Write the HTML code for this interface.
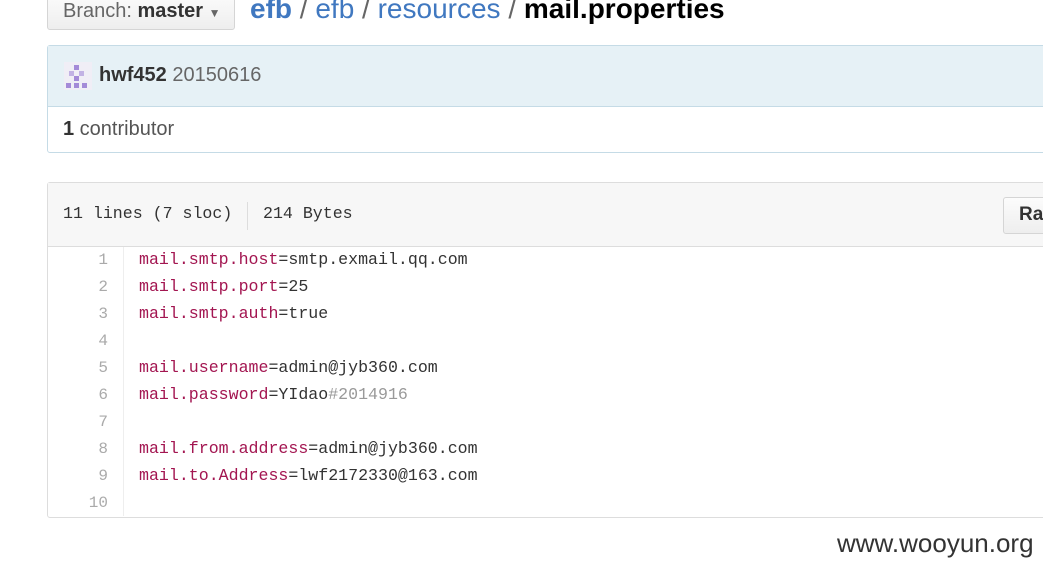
<!DOCTYPE html>
<html><head><style>
body{margin:0;width:1043px;height:573px;overflow:hidden;background:#fff;font-family:"Liberation Sans",Arial,sans-serif;position:relative}
.a{position:absolute}
.mono{font-family:"Liberation Mono",monospace;font-size:16.6px}
.k{color:#a31651}
.c{color:#999}
.ln{position:absolute;left:48px;width:60px;text-align:right;color:#aaa;font-family:"Liberation Mono",monospace;font-size:16px}
</style></head><body>
<div class="a" style="left:47px;top:-8px;width:186px;height:36px;border:1px solid #d5d5d5;border-radius:3px;background:linear-gradient(#fcfcfc,#eee)"></div>
<div class="a" style="left:63px;top:0px;font-size:20px;color:#666">Branch: <b style="color:#333">master</b> <span style="font-size:12px">▼</span></div>
<div class="a" style="left:250px;top:-7px;font-size:28px;color:#4078c0;white-space:nowrap"><b>efb</b> <span style="color:#666">/</span> efb <span style="color:#666">/</span> resources <span style="color:#666">/</span> <b style="color:#000">mail.properties</b></div>

<div class="a" style="left:47px;top:45px;width:1010px;height:106px;border:1px solid #c5dbe6;border-radius:3px;background:#fff"></div>
<div class="a" style="left:48px;top:46px;width:1000px;height:60px;background:#e6f1f6;border-bottom:1px solid #c5dbe6"></div>
<svg class="a" style="left:64px;top:62px" width="28" height="28" viewBox="0 0 28 28"><rect width="28" height="28" fill="#f0eef6"/><g fill="#a48ad8"><rect x="10" y="3" width="5" height="5"/><rect x="5" y="9" width="5" height="5" opacity=".6"/><rect x="15" y="9" width="5" height="5" opacity=".6"/><rect x="10" y="14" width="5" height="5"/><rect x="2" y="21" width="5" height="5"/><rect x="10" y="21" width="5" height="5"/><rect x="18" y="21" width="5" height="5"/></g></svg>
<div class="a" style="left:99px;top:64px;font-size:20px;color:#666"><b style="color:#333">hwf452</b> 20150616</div>
<div class="a" style="left:63px;top:118px;font-size:20px;color:#555"><b style="color:#333">1</b> contributor</div>

<div class="a" style="left:47px;top:182px;width:1010px;height:334px;border:1px solid #ddd;border-radius:3px"></div>
<div class="a" style="left:48px;top:183px;width:1000px;height:63px;background:#f7f7f7;border-bottom:1px solid #ddd"></div>
<div class="a mono" style="left:63px;top:204px;color:#333">11 lines (7 sloc)</div>
<div class="a" style="left:247px;top:202px;width:1px;height:28px;background:#ddd"></div>
<div class="a mono" style="left:263px;top:204px;color:#333">214 Bytes</div>
<div class="a" style="left:1003px;top:197px;width:60px;height:35px;border:1px solid #d5d5d5;border-radius:3px;background:linear-gradient(#fcfcfc,#eee)"></div>
<div class="a" style="left:1019px;top:204px;font-size:19px;font-weight:bold;color:#333">Ra</div>
<div class="a" style="left:123px;top:247px;width:1px;height:269px;background:#eee"></div>

<div class="ln" style="top:251px">1</div><div class="ln" style="top:278px">2</div><div class="ln" style="top:305px">3</div><div class="ln" style="top:332px">4</div><div class="ln" style="top:359px">5</div><div class="ln" style="top:386px">6</div><div class="ln" style="top:413px">7</div><div class="ln" style="top:440px">8</div><div class="ln" style="top:467px">9</div><div class="ln" style="top:494px">10</div>

<div class="a mono" style="left:139px;top:246px;line-height:27px;color:#333;white-space:pre"><span class="k">mail.smtp.host</span>=smtp.exmail.qq.com
<span class="k">mail.smtp.port</span>=25
<span class="k">mail.smtp.auth</span>=true

<span class="k">mail.username</span>=admin@jyb360.com
<span class="k">mail.password</span>=YIdao<span class="c">#2014916</span>

<span class="k">mail.from.address</span>=admin@jyb360.com
<span class="k">mail.to.Address</span>=lwf2172330@163.com
</div>

<div class="a" style="left:837px;top:528px;font-size:26px;color:#333">www.wooyun.org</div>
</body></html>
